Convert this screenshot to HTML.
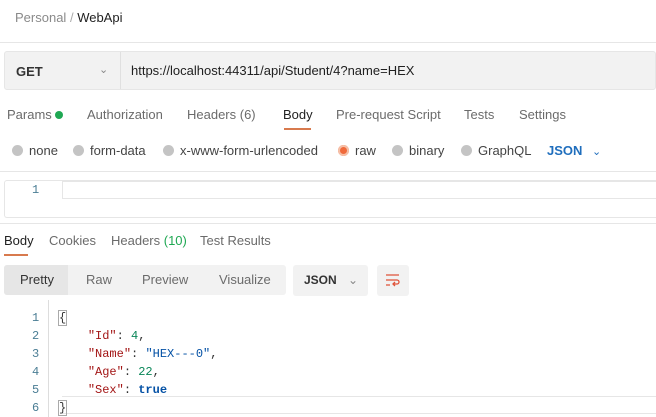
<!DOCTYPE html>
<html><head><meta charset="utf-8"><style>
*{margin:0;padding:0;box-sizing:border-box}
body{width:656px;height:417px;overflow:hidden;background:#fff;font-family:"Liberation Sans",sans-serif;font-size:13px;color:#212121;position:relative}
.a{position:absolute;white-space:nowrap}
.g{color:#6b6b6b}
.mono{font-family:"Liberation Mono",monospace;font-size:12px}
.rd{display:inline-block;width:11px;height:11px;border-radius:50%;background:#c4c4c4;vertical-align:-1px;margin-right:6px}
</style></head><body>
<div class="a" style="left:15px;top:10px;font-size:13px"><span style="color:#8a8a8a">Personal</span> <span style="color:#aaa">/</span> <span style="color:#212121">WebApi</span></div>
<div class="a" style="left:0;top:42px;width:656px;height:1px;background:#e6e6e6"></div>
<div class="a" style="left:4px;top:51px;width:652px;height:39px;background:#f2f2f2;border:1px solid #e6e6e6;border-radius:3px"></div>
<div class="a" style="left:120px;top:52px;width:1px;height:37px;background:#e0e0e0"></div>
<div class="a" style="left:16px;top:64px;font-weight:bold;color:#333">GET</div>
<div class="a" style="left:99px;top:63px;color:#888;font-size:11px">&#8964;</div>
<div class="a" style="left:131px;top:63px;color:#212121">https://localhost:44311/api/Student/4?name=HEX</div>
<div class="a g" style="left:7px;top:107px">Params <span style="display:inline-block;width:8px;height:8px;border-radius:50%;background:#1fa853"></span></div>
<div class="a g" style="left:87px;top:107px">Authorization</div>
<div class="a g" style="left:187px;top:107px">Headers <span>(6)</span></div>
<div class="a" style="left:283px;top:107px">Body</div>
<div class="a" style="left:284px;top:128px;width:27px;height:2px;background:#d87a4e"></div>
<div class="a g" style="left:336px;top:107px">Pre-request Script</div>
<div class="a g" style="left:464px;top:107px">Tests</div>
<div class="a g" style="left:519px;top:107px">Settings</div>
<div class="a" style="left:12px;top:143px;color:#444"><span class="rd"></span>none</div>
<div class="a" style="left:73px;top:143px;color:#444"><span class="rd"></span>form-data</div>
<div class="a" style="left:163px;top:143px;color:#444"><span class="rd"></span>x-www-form-urlencoded</div>
<div class="a" style="left:338px;top:143px;color:#444"><span class="rd" style="background:#f06a3b;box-shadow:inset 0 0 0 2px #f5c0a8"></span>raw</div>
<div class="a" style="left:392px;top:143px;color:#444"><span class="rd"></span>binary</div>
<div class="a" style="left:461px;top:143px;color:#444"><span class="rd"></span>GraphQL</div>
<div class="a" style="left:547px;top:143px;color:#1f6ebd;font-weight:bold">JSON <span style="font-weight:normal;font-size:11px;margin-left:6px">&#8964;</span></div>
<div class="a" style="left:0;top:171px;width:656px;height:1px;background:#e6e6e6"></div>
<div class="a" style="left:4px;top:180px;width:652px;height:38px;border:1px solid #e6e6e6;border-right:none;border-radius:3px 0 0 3px"></div>
<div class="a" style="left:62px;top:181px;width:594px;height:18px;border:1px solid #e6e6e6;border-right:none"></div>
<div class="a mono" style="left:32px;top:183px;color:#4a7d94">1</div>
<div class="a" style="left:0;top:223px;width:656px;height:1px;background:#e6e6e6"></div>
<div class="a" style="left:4px;top:233px">Body</div>
<div class="a" style="left:4px;top:254px;width:24px;height:2px;background:#d87a4e"></div>
<div class="a g" style="left:49px;top:233px">Cookies</div>
<div class="a g" style="left:111px;top:233px">Headers <span style="color:#1fa853">(10)</span></div>
<div class="a g" style="left:200px;top:233px">Test Results</div>
<div class="a" style="left:4px;top:265px;width:282px;height:30px;background:#f2f2f2;border-radius:3px"></div>
<div class="a" style="left:4px;top:265px;width:64px;height:30px;background:#e6e6e6;border-radius:3px 0 0 3px"></div>
<div class="a" style="left:20px;top:272px;color:#333">Pretty</div>
<div class="a g" style="left:86px;top:272px">Raw</div>
<div class="a g" style="left:142px;top:272px">Preview</div>
<div class="a g" style="left:219px;top:272px">Visualize</div>
<div class="a" style="left:293px;top:265px;width:75px;height:31px;background:#f2f2f2;border-radius:3px"></div>
<div class="a" style="left:304px;top:273px;font-weight:bold;font-size:12px;color:#333">JSON <span style="font-weight:normal;color:#888;margin-left:8px">&#8964;</span></div>
<div class="a" style="left:377px;top:265px;width:32px;height:31px;background:#f2f2f2;border-radius:3px"></div>
<svg class="a" style="left:384px;top:273px" width="18" height="14" viewBox="0 0 18 14"><path d="M2 2h13M2 7h11a2 2 0 0 1 0 4h-3M11 9l-2 2 2 2M2 12h4" stroke="#e0533a" stroke-width="1.3" fill="none"/></svg>
<div class="a" style="left:48px;top:300px;width:1px;height:117px;background:#ddd"></div>
<div class="a" style="left:62px;top:396px;width:594px;height:18px;border-top:1px solid #e6e6e6;border-bottom:1px solid #e6e6e6"></div>
<div class="a mono" style="left:32px;top:309px;line-height:18px;color:#4a7d94">1<br>2<br>3<br>4<br>5<br>6</div>
<div class="a mono" style="left:59px;top:309px;line-height:18px;color:#333"><span style="outline:1px solid #aaa">{</span><br>&nbsp;&nbsp;&nbsp;&nbsp;<span style="color:#a31515">"Id"</span>: <span style="color:#098658">4</span>,<br>&nbsp;&nbsp;&nbsp;&nbsp;<span style="color:#a31515">"Name"</span>: <span style="color:#0451a5">"HEX---0"</span>,<br>&nbsp;&nbsp;&nbsp;&nbsp;<span style="color:#a31515">"Age"</span>: <span style="color:#098658">22</span>,<br>&nbsp;&nbsp;&nbsp;&nbsp;<span style="color:#a31515">"Sex"</span>: <span style="color:#0451a5;font-weight:bold">true</span><br><span style="outline:1px solid #aaa">}</span></div>
</body></html>
